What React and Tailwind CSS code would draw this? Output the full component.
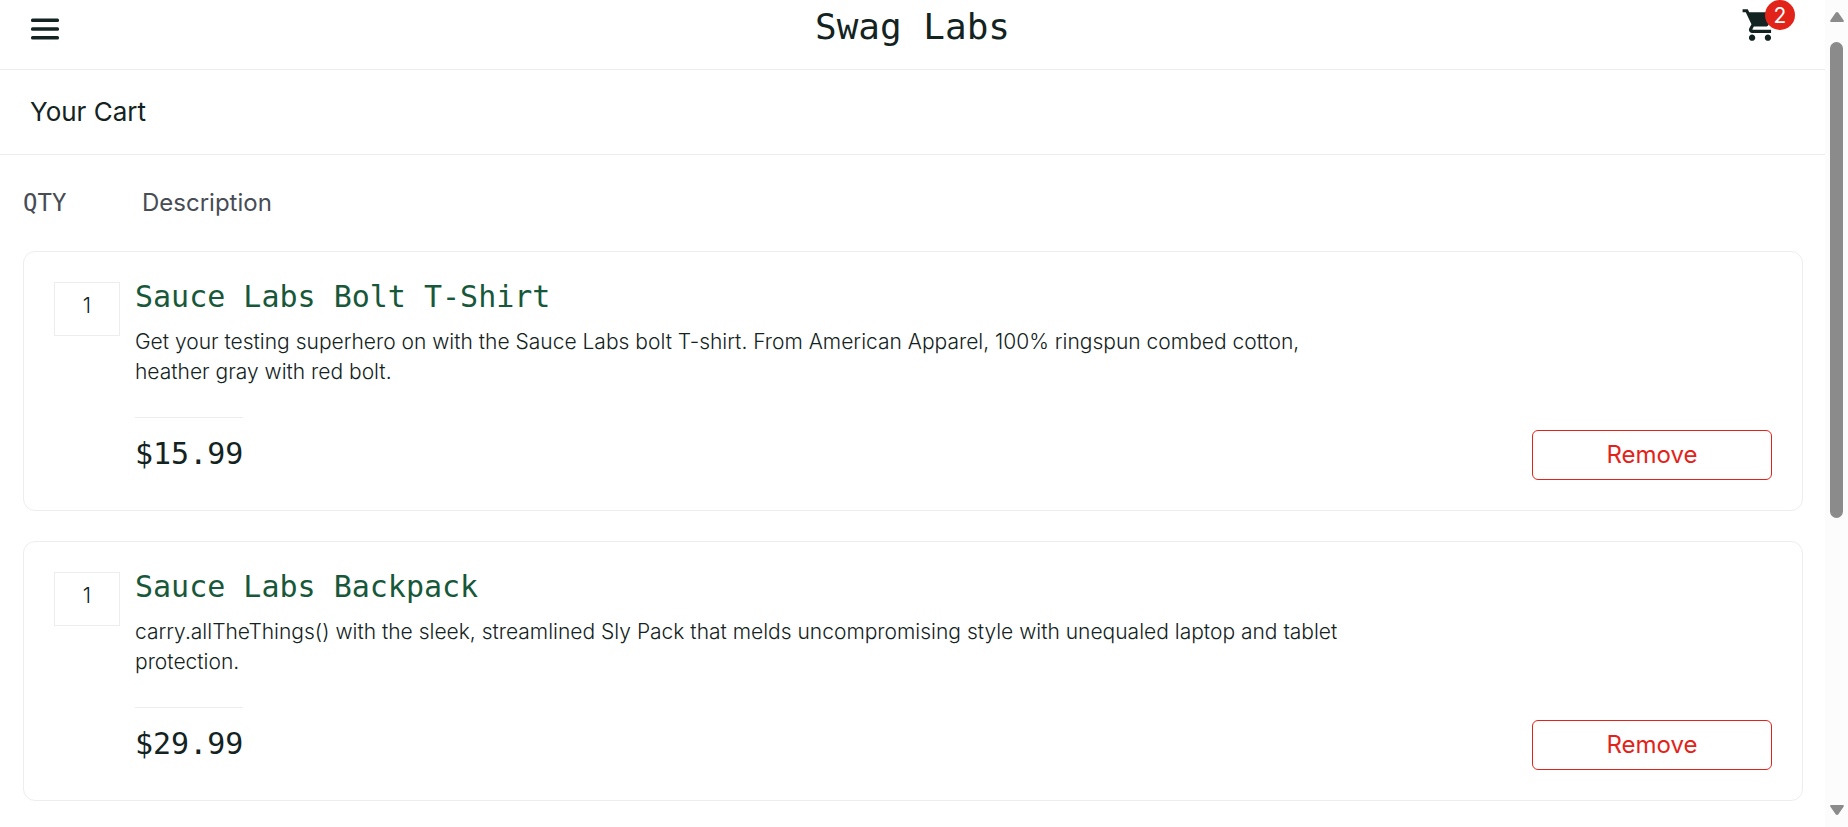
import { MdShoppingCart } from "react-icons/md";

const sans = "font-['Inter','Noto_Sans',sans-serif]";
const mono = "font-['DejaVu_Sans_Mono',monospace]";

const items = [
  {
    id: "bolt-t-shirt",
    qty: 1,
    name: "Sauce Labs Bolt T-Shirt",
    description:
      "Get your testing superhero on with the Sauce Labs bolt T-shirt. From American Apparel, 100% ringspun combed cotton, heather gray with red bolt.",
    price: "$15.99",
  },
  {
    id: "backpack",
    qty: 1,
    name: "Sauce Labs Backpack",
    description:
      "carry.allTheThings() with the sleek, streamlined Sly Pack that melds uncompromising style with unequaled laptop and tablet protection.",
    price: "$29.99",
  },
];

function Header() {
  return (
    <header className="grid h-[70px] grid-cols-[1fr_auto_1fr] items-start border-b border-[#ededed]">
      <button type="button" aria-label="Open Menu" className="ml-[31px] mt-[18px] w-7">
        <svg viewBox="0 0 28 22" className="block h-[22px] w-7" fill="#132322">
          <rect x="0" y="0.5" width="28" height="3.4" rx="1.5" />
          <rect x="0" y="9.3" width="28" height="3.4" rx="1.5" />
          <rect x="0" y="18.1" width="28" height="3.4" rx="1.5" />
        </svg>
      </button>
      <div className={`${mono} pt-1 text-[36px] leading-[46px]`}>Swag Labs</div>
      <a href="#cart" aria-label="Shopping cart" className="relative mr-[46px] mt-[6px] block justify-self-end">
        <MdShoppingCart className="block size-[38px]" />
        <span className="absolute -right-4 -top-1.5 flex size-[30px] items-center justify-center rounded-full bg-[#e2231a] text-[21px] leading-none text-white">
          2
        </span>
      </a>
    </header>
  );
}

function CartItem({ item }) {
  return (
    <li className="flex gap-[15px] rounded-xl border border-[#ededed] p-[30px]">
      <div className="flex h-[54px] w-[66px] shrink-0 justify-center border border-[#ededed] pt-2 text-[21px] font-light leading-[30px]">
        {item.qty}
      </div>
      <div className="min-w-0 flex-1">
        <a href={`#${item.id}`} className={`${mono} block text-[30px] leading-[30px] text-[#18583a]`}>
          {item.name}
        </a>
        <p className="mt-[15px] max-w-[74%] text-[21px] font-light leading-[30px]">{item.description}</p>
        <div className="mt-[30px] flex items-end justify-between">
          <div className={`${mono} mb-2 border-t border-[#ededed] pt-[18px] text-[30px] leading-9`}>
            {item.price}
          </div>
          <button
            type="button"
            className="h-[50px] w-60 rounded-md border border-[#e2231a] text-[24px] leading-none text-[#e2231a]"
          >
            Remove
          </button>
        </div>
      </div>
    </li>
  );
}

function Scrollbar() {
  return (
    <div aria-hidden="true" className="flex w-[23px] shrink-0 flex-col items-center bg-[#fcfcfc] py-3">
      <svg viewBox="0 0 14 10" className="h-2.5 w-3.5" fill="#8b8b8b">
        <path d="M5.6 0.8Q7-0.8 8.4 0.8L13.7 8.4Q14.2 10 13 10H1Q-0.2 10 0.3 8.4Z" />
      </svg>
      <div className="my-5 flex w-[13px] flex-1 flex-col">
        <div className="h-[64%] rounded-full bg-[#8b8b8b]" />
      </div>
      <svg viewBox="0 0 14 10" className="h-2.5 w-3.5" fill="#8b8b8b">
        <path d="M5.6 9.2Q7 10.8 8.4 9.2L13.7 1.6Q14.2 0 13 0H1Q-0.2 0 0.3 1.6Z" />
      </svg>
    </div>
  );
}

export default function App() {
  return (
    <div className={`${sans} flex min-h-screen bg-white text-[#132322]`}>
      <div className="min-w-0 flex-1">
        <Header />
        <div className="flex h-[85px] items-center border-b border-[#ededed] px-[30px]">
          <h1 className="text-[26px] leading-9">Your Cart</h1>
        </div>
        <main className="pl-[23px] pr-[22px] pt-[30px]">
          <div className="flex h-9 items-center text-[24px] leading-9 text-[#484c55]">
            <div className={`${mono} w-[119px]`}>QTY</div>
            <div>Description</div>
          </div>
          <ul className="mt-[30px] flex flex-col gap-[30px]">
            {items.map((item) => (
              <CartItem key={item.id} item={item} />
            ))}
          </ul>
        </main>
      </div>
      <Scrollbar />
    </div>
  );
}
